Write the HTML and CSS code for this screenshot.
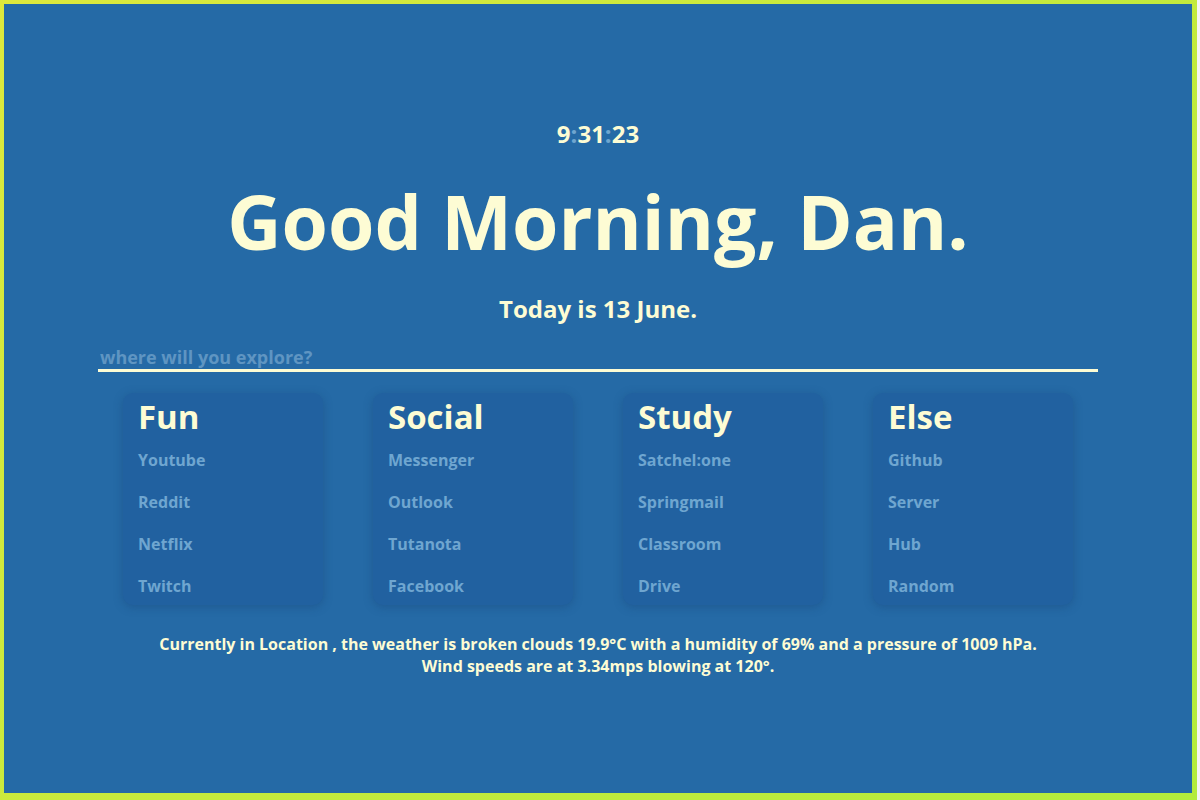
FILE: index.html
```html
<!DOCTYPE html>
<html lang="en">
<head>
<meta charset="utf-8">
<title>Start</title>
<link rel="stylesheet" href="styles.css">
</head>
<body>
<div class="frame">
  <main class="page">
    <div class="clock">9<span class="sep">:</span>31<span class="sep">:</span>23</div>
    <h1 class="greeting">Good Morning, Dan.</h1>
    <p class="today">Today is 13 June.</p>
    <input class="search" type="text" placeholder="where will you explore?">
    <section class="cards">
      <div class="card">
        <h2>Fun</h2>
        <a href="#">Youtube</a>
        <a href="#">Reddit</a>
        <a href="#">Netflix</a>
        <a href="#">Twitch</a>
      </div>
      <div class="card">
        <h2>Social</h2>
        <a href="#">Messenger</a>
        <a href="#">Outlook</a>
        <a href="#">Tutanota</a>
        <a href="#">Facebook</a>
      </div>
      <div class="card">
        <h2>Study</h2>
        <a href="#">Satchel:one</a>
        <a href="#">Springmail</a>
        <a href="#">Classroom</a>
        <a href="#">Drive</a>
      </div>
      <div class="card">
        <h2>Else</h2>
        <a href="#">Github</a>
        <a href="#">Server</a>
        <a href="#">Hub</a>
        <a href="#">Random</a>
      </div>
    </section>
    <p class="weather">Currently in Location , the weather is broken clouds 19.9°C with a humidity of 69% and a pressure of 1009 hPa.<br>Wind speeds are at 3.34mps blowing at 120°.</p>
  </main>
</div>
</body>
</html>
```

FILE: styles.css
```css
html, body {
  margin: 0;
  padding: 0;
  background: #f4f4f4;
}
.frame {
  width: 1197px;
  height: 800px;
  box-sizing: border-box;
  padding: 4px 5px 7px 4px;
  background: linear-gradient(135deg, #dde83c 0%, #c6ea3c 50%, #b3ec3c 100%);
}
.page {
  height: 100%;
  background: #256aa6;
  display: flex;
  flex-direction: column;
  align-items: center;
  font-family: "Open Sans", "Liberation Sans", sans-serif;
  font-weight: 700;
  color: #fdfcd4;
  overflow: hidden;
}
.clock {
  margin-top: 115px;
  font-size: 24px;
  line-height: 30px;
}
.sep {
  color: #6fa6d0;
}
.greeting {
  margin: 35px 0 0;
  font-size: 75px;
  line-height: 75px;
  font-weight: 700;
}
.today {
  margin: 35px 0 0;
  font-size: 24px;
  line-height: 30px;
}
.search {
  margin-top: 20px;
  width: 1000px;
  height: 28px;
  box-sizing: border-box;
  padding: 0 2px;
  background: transparent;
  border: none;
  border-bottom: 3px solid #fdfcd4;
  outline: none;
  font-family: "Open Sans", "Liberation Sans", sans-serif;
  font-weight: 700;
  font-size: 18px;
  line-height: 24px;
  color: #fdfcd4;
}
.search::placeholder {
  color: #5f95c2;
  opacity: 1;
}
.cards {
  margin-top: 21px;
  width: 1000px;
  display: grid;
  grid-template-columns: repeat(4, 1fr);
}
.card {
  justify-self: center;
  width: 200px;
  height: 212px;
  box-sizing: border-box;
  padding: 0 15px;
  background: #2161a0;
  border-radius: 10px;
  box-shadow: 0 2px 10px rgba(20, 60, 110, 0.35);
  display: flex;
  flex-direction: column;
}
.card h2 {
  margin: 2px 0 0;
  font-size: 33px;
  line-height: 44px;
  font-weight: 700;
}
.card a {
  color: #6fa6d0;
  text-decoration: none;
  font-size: 16px;
  line-height: 42px;
}
.weather {
  margin: 28px 0 0;
  text-align: center;
  font-size: 16px;
  line-height: 22px;
}
```
